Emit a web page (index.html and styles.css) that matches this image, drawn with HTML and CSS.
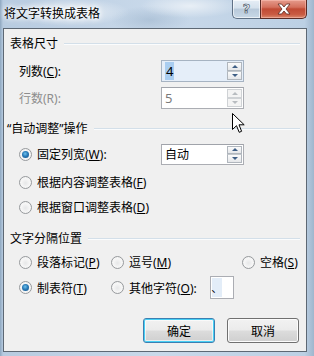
FILE: index.html
```html
<!DOCTYPE html>
<html lang="zh-CN">
<head>
<meta charset="utf-8">
<title>将文字转换成表格</title>
<link rel="stylesheet" href="styles.css">
</head>
<body>
<div class="window">
  <div class="titlebar">
    <div class="title">将文字转换成表格</div>
    <div class="caption-btns">
      <div class="cap-btn help"><span class="glyph">?</span></div>
      <div class="cap-btn close">
        <svg width="16" height="12" viewBox="0 0 16 12"><path d="M2 1 H5.5 L8 4 L10.5 1 H14 L10 6 L14 11 H10.5 L8 8 L5.5 11 H2 L6 6 Z" fill="#fff" stroke="#5a2a22" stroke-width="0.8" stroke-linejoin="round"/></svg>
      </div>
    </div>
  </div>
  <div class="client">
    <div class="group-head h1"><span>表格尺寸</span></div>
    <div class="field-row r-cols">
      <span class="field-label"><span>列数(<u>C</u>):</span></span>
      <div class="spin focused">
        <div class="spin-text"><span class="sel">4</span></div>
        <div class="spin-btns"><span class="sb up"></span><span class="sb down"></span></div>
      </div>
    </div>
    <div class="field-row r-rows">
      <span class="field-label disabled"><span>行数(R):</span></span>
      <div class="spin disabled">
        <div class="spin-text"><span>5</span></div>
        <div class="spin-btns"><span class="sb up"></span><span class="sb down"></span></div>
      </div>
    </div>
    <div class="group-head h2"><span>“自动调整”操作</span></div>
    <div class="field-row r-fix">
      <span class="field-label radio-label"><span class="radio checked"></span><span>固定列宽(<u>W</u>):</span></span>
      <div class="spin combo">
        <div class="spin-text"><span>自动</span></div>
        <div class="spin-btns"><span class="sb up"></span><span class="sb down"></span></div>
      </div>
    </div>
    <div class="field-row r-content">
      <span class="radio-label"><span class="radio"></span><span>根据内容调整表格(<u>F</u>)</span></span>
    </div>
    <div class="field-row r-window">
      <span class="radio-label"><span class="radio"></span><span>根据窗口调整表格(<u>D</u>)</span></span>
    </div>
    <div class="group-head h3"><span>文字分隔位置</span></div>
    <div class="sep-row s1">
      <span class="radio-label"><span class="radio"></span><span>段落标记(<u>P</u>)</span></span>
      <span class="radio-label"><span class="radio"></span><span>逗号(<u>M</u>)</span></span>
      <span class="radio-label"><span class="radio"></span><span>空格(<u>S</u>)</span></span>
    </div>
    <div class="sep-row s2">
      <span class="radio-label"><span class="radio checked"></span><span>制表符(<u>T</u>)</span></span>
      <span class="radio-label other"><span class="radio"></span><span>其他字符(<u>O</u>):</span><span class="char-box"><span class="char-sel">、</span></span></span>
    </div>
    <div class="button-row">
      <div class="btn default">确定</div>
      <div class="btn">取消</div>
    </div>
  </div>
  <svg class="cursor" width="13" height="21" viewBox="0 0 13 21"><path d="M0.5 0.5 V16.5 L4.5 12.7 L7.2 19.3 L9.6 18.3 L7 11.8 H12.2 Z" fill="#fff" stroke="#000" stroke-width="1" stroke-linejoin="miter"/></svg>
</div>
</body>
</html>
```
FILE: styles.css
```css
* { box-sizing: border-box; }
html, body { margin: 0; padding: 0; }
body {
  width: 314px;
  height: 356px;
  overflow: hidden;
  font-family: "Noto Sans", "Noto Sans CJK SC", sans-serif;
  font-size: 12px;
  color: #000;
}
u { text-decoration: underline; text-underline-offset: 1px; }

.window {
  position: relative;
  width: 314px;
  height: 356px;
  display: flex;
  flex-direction: column;
  background:
    radial-gradient(ellipse 60px 14px at 70px 12px, rgba(255,255,255,0.7), rgba(255,255,255,0) 100%),
    radial-gradient(ellipse 50px 12px at 190px 6px, rgba(255,255,255,0.6), rgba(255,255,255,0) 100%),
    radial-gradient(ellipse 40px 14px at 150px 20px, rgba(150,175,200,0.5), rgba(150,175,200,0) 100%),
    linear-gradient(90deg, #8ea7c0 0px, #b7cbe0 3px, #c9d9ea 50%, #bcd0e4 97%, #9fb6cd 100%);
}

.titlebar {
  height: 28px;
  flex: none;
  display: flex;
  align-items: flex-start;
  padding: 0 7px 0 4px;
}
.title {
  margin-top: 5px;
  line-height: 17px;
  font-size: 12px;
  text-shadow: 0 0 4px #fff, 0 0 6px #fff, 0 0 8px rgba(255,255,255,0.9);
}
.caption-btns {
  margin-left: auto;
  display: flex;
  height: 19px;
}
.cap-btn {
  height: 19px;
  display: flex;
  align-items: center;
  justify-content: center;
  border: 1px solid #5f7186;
  border-top: none;
}
.cap-btn.help {
  width: 28px;
  border-right: none;
  border-radius: 0 0 0 5px;
  background: linear-gradient(#e6eef6 0%, #d5e1ec 45%, #b8c9da 50%, #c8d8e7 100%);
  box-shadow: inset 0 0 0 1px rgba(255,255,255,0.6);
}
.cap-btn.help .glyph {
  font-family: "DejaVu Sans", sans-serif;
  font-weight: bold;
  font-size: 13px;
  color: #e8edf2;
  -webkit-text-stroke: 0.6px #3e4b59;
  line-height: 1;
  margin-top: -1px;
}
.cap-btn.close {
  width: 47px;
  border-radius: 0 0 5px 0;
  border-color: #5a2b25;
  background: linear-gradient(#e59b8c 0%, #d4705d 40%, #c04a34 50%, #c95b42 80%, #d98a6e 100%);
  box-shadow: inset 0 0 0 1px rgba(255,200,190,0.5);
}

.client {
  flex: 1;
  margin: 0 7px 4px 3px;
  border: 1px solid #5d6874;
  background: #f0f0f0;
  display: flex;
  flex-direction: column;
  padding-top: 6px;
}

.group-head {
  display: flex;
  align-items: center;
  height: 16px;
  padding: 0 6px 0 6px;
  gap: 6px;
  flex: none;
}
.group-head::after {
  content: "";
  flex: 1;
  height: 1px;
  background: #d3dfe9;
  box-shadow: 0 1px 0 #fbfcfd;
}
.group-head.h2 { padding-left: 3px; margin-top: 11px; }
.group-head.h3 { margin-top: 12px; }

.field-row {
  display: flex;
  align-items: center;
  height: 22px;
  padding-left: 15px;
  flex: none;
}
.r-cols { margin-top: 9px; }
.r-rows { margin-top: 5px; }
.r-fix { margin-top: 7px; }
.r-content { margin-top: 6px; }
.r-window { margin-top: 3px; }

.field-label { width: 142px; flex: none; display: flex; align-items: center; }
.disabled { color: #8d8d8d; }

.spin {
  width: 83px;
  height: 22px;
  border: 1px solid #abadb3;
  border-top-color: #a0a3aa;
  background: #fff;
  display: flex;
  align-items: stretch;
  padding: 1px;
}
.spin.focused { background: #e5eef9; border-color: #a6b3c2; }
.spin.combo { height: 21px; }
.spin-text {
  flex: 1;
  display: flex;
  align-items: center;
  padding-left: 2px;
  font-size: 13px;
}
.spin.combo .spin-text { font-size: 12px; }
.spin.disabled .spin-text { color: #7a7a7a; }
.sel {
  background: #a9cdf0;
  padding: 1px 1px;
  line-height: 16px;
}
.spin-btns {
  width: 15px;
  display: flex;
  flex-direction: column;
  gap: 0;
}
.sb {
  flex: 1;
  display: flex;
  align-items: center;
  justify-content: center;
  border: 1px solid #b0b6bd;
  background: linear-gradient(#fbfbfb, #e5e7ea);
}
.sb.down { border-top-color: #c3c8cd; }
.sb::before {
  content: "";
  width: 0;
  height: 0;
  border-left: 3px solid transparent;
  border-right: 3px solid transparent;
}
.sb.up::before { border-bottom: 3px solid #3f5f86; }
.sb.down::before { border-top: 3px solid #3f5f86; }
.spin.disabled .sb { border-color: #cfd2d5; background: #f4f4f4; }
.spin.disabled .sb.up::before { border-bottom-color: #b8bcc0; }
.spin.disabled .sb.down::before { border-top-color: #b8bcc0; }

.radio-label {
  display: flex;
  align-items: center;
  gap: 5px;
  white-space: nowrap;
}
.radio {
  width: 13px;
  height: 13px;
  border-radius: 50%;
  flex: none;
  border: 1px solid #979a9d;
  background: radial-gradient(circle at 50% 55%, #e6e7e8 0%, #f7f7f7 55%, #d9dadb 100%);
  box-shadow: inset 0 0 0 1px #f5f5f5;
  position: relative;
}
.radio.checked::after {
  content: "";
  position: absolute;
  left: 2px;
  top: 2px;
  width: 7px;
  height: 7px;
  border-radius: 50%;
  background: radial-gradient(circle at 45% 40%, #6fc3ee 0%, #2a7bb8 45%, #0f4f86 100%);
}

.sep-row {
  display: grid;
  grid-template-columns: 92px 131px auto;
  align-items: center;
  padding-left: 15px;
  flex: none;
}
.sep-row.s1 { height: 22px; margin-top: 5px; }
.sep-row.s2 { height: 23px; margin-top: 3px; }
.char-box {
  width: 24px;
  height: 23px;
  border: 1px solid #abadb3;
  background: #fff;
  margin-left: 8px;
  display: flex;
  align-items: stretch;
  padding: 1px;
}
.char-sel {
  width: 10px;
  background: #e3edf8;
  display: flex;
  align-items: center;
  justify-content: center;
  font-size: 11px;
  line-height: 1;
}

.button-row {
  display: flex;
  justify-content: flex-end;
  gap: 12px;
  padding-right: 7px;
  margin-top: 19px;
  flex: none;
}
.btn {
  width: 72px;
  height: 25px;
  border: 1px solid #707070;
  border-radius: 3px;
  display: flex;
  align-items: center;
  justify-content: center;
  background: linear-gradient(#f2f2f2 0%, #ebebeb 48%, #dcdcdc 52%, #cfcfcf 100%);
  box-shadow: inset 0 0 0 1px #fcfcfc;
}
.btn.default {
  border-color: #3c7fb1;
  box-shadow: inset 0 0 0 1px #48d0f5, inset 0 0 0 2px rgba(255,255,255,0.6);
}

.cursor {
  position: absolute;
  left: 232px;
  top: 113px;
}
```
